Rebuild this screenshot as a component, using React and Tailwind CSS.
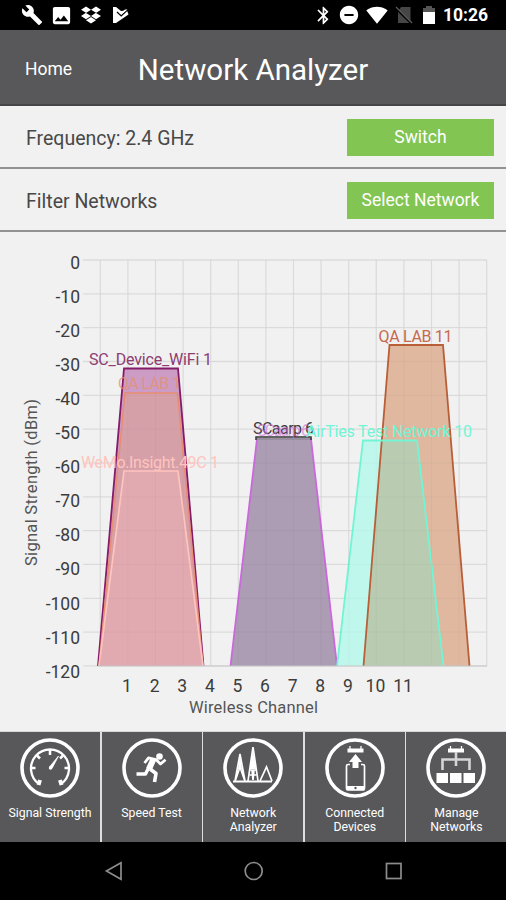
import {
  MdBuild,
  MdImage,
  MdBluetooth,
  MdDoNotDisturbOn,
  MdSignalWifi4Bar,
} from 'react-icons/md'
import { FaDropbox } from 'react-icons/fa6'

const LEFT = 83
const RIGHT = 487
const TOP = 28
const BOTTOM = 434

const vLines = Array.from({ length: 15 }, (_, i) => 100.3 + i * 27.6)
const hLines = Array.from({ length: 13 }, (_, i) => TOP + i * 33.83)
const levels = Array.from({ length: 13 }, (_, i) => i * -10)
const channels = [1, 2, 3, 4, 5, 6, 7, 8, 9, 10, 11]

function StatusBar() {
  return (
    <div className="h-[30px] bg-black text-white flex items-center justify-between pl-[21px] pr-[19px]">
      <div className="flex items-center">
        <MdBuild className="w-[22px] h-[22px]" />
        <MdImage className="w-[23px] h-[23px] ml-[7px]" />
        <FaDropbox className="w-[20px] h-[20px] ml-[8px]" />
        <svg viewBox="0 0 18 18" className="w-[18px] h-[18px] ml-[11px]">
          <path d="M1 1 L4 1 L9 5 L15 4.500 L16.500 8.500 L4 17 H1 Z" fill="#fff" />
          <path d="M5 6 L9.200 9.800 L16.500 3" stroke="#000" strokeWidth="1.300" fill="none" />
          <path d="M9 6.800 L13 3.500 L15.500 3.500 L9.300 8.800 L6.500 6.500 Z" fill="#fff" />
        </svg>
      </div>
      <div className="flex items-center">
        <MdBluetooth className="w-[21px] h-[21px]" />
        <MdDoNotDisturbOn className="w-[22px] h-[22px] ml-[4px]" />
        <MdSignalWifi4Bar className="w-[22px] h-[22px] ml-[6px]" />
        <svg viewBox="0 0 18 18" className="w-[18px] h-[18px] ml-[7px]">
          <path d="M6 1 H15.500 V17 H3 V6 Z" fill="#464646" />
          <path d="M1 2.500 L17 18" stroke="#000" strokeWidth="2.200" />
          <path d="M1 1 L17 17" stroke="#5a5a5a" strokeWidth="1.300" />
        </svg>
        <svg viewBox="0 0 14 20" className="w-[14px] h-[20px] ml-[9px]">
          <path d="M4 1h6v2h3v4H1V3h3z" fill="#555" />
          <path d="M1 7h12v12H1z" fill="#fff" />
        </svg>
        <span className="ml-[7px] w-[44px] whitespace-nowrap text-[17.5px] font-bold leading-none pt-[2px]">10:26</span>
      </div>
    </div>
  )
}

function SettingRow({ label, action }) {
  return (
    <div className="h-[63px] pl-[26px] pr-3 pt-[2px] flex items-center justify-between border-b-2 border-[#929292] text-[19.5px] text-[#484848]">
      <span className="pt-[2px]">{label}</span>
      <button className="w-[147px] h-[37px] bg-[#82c553] text-white text-[17.5px]">{action}</button>
    </div>
  )
}

function Chart() {
  return (
    <svg viewBox="0 0 506 499" className="w-[506px] h-[499px] block">
      <g stroke="#e1e1e1" strokeWidth="1.3">
        {vLines.map(x => <line key={x} x1={x} x2={x} y1={TOP} y2={BOTTOM} />)}
        {hLines.map(y => <line key={y} x1={LEFT} x2={RIGHT} y1={y} y2={y} />)}
      </g>

      {/* channel 1 */}
      <path d="M98 434 L124 136.500 H178 L203.500 434 Z" fill="#cc9cc5" />
      <path d="M98.500 434 L124.500 161 H178 L203 434 Z" fill="#d6a0a9" />
      <path d="M99 434 L124 239 H178 L203 434 Z" fill="#e1aab0" />
      <path d="M98 434 L124 136.500 H178 L203.500 434" fill="none" stroke="#861b68" strokeWidth="1.8" />
      <path d="M99 434 L125 161 H177.500 L203 434" fill="none" stroke="#e78d73" strokeWidth="1.5" />
      <path d="M99 434 L124 239 H178 L203 434" fill="none" stroke="#ffc4bd" strokeWidth="1.7" />

      {/* channel 6 */}
      <path d="M230.500 434 L257 207 H311 L337 434 Z" fill="#ac9cb4" />
      <path d="M230.500 434 L257 207 H311 L337 434" fill="none" stroke="#cb68dc" strokeWidth="1.8" />
      <path d="M256 208 V205 H311 V208" fill="none" stroke="#333" strokeWidth="1.5" />
      <path d="M258 207 H310" stroke="#65b565" strokeWidth="1" />

      {/* channels 10 and 11 */}
      <path d="M363.500 434 L389.500 113 H443 L469.500 434 Z" fill="#e0b8a0" />
      <path d="M337 434 L363 208.500 H417 L443.500 434 Z" fill="#c0f7ec" />
      <path d="M363.500 434 L381.800 208.500 H417 L443.500 434 Z" fill="#b9ccb2" />
      <path d="M363.500 434 L389.500 113 H443 L469.500 434" fill="none" stroke="#b85f38" strokeWidth="1.8" />
      <path d="M337 434 L363 208.500 H417 L443.500 434" fill="none" stroke="#70f5d5" strokeWidth="1.8" />

      {/* grid shows faintly through the fills */}
      <g stroke="#000" strokeOpacity="0.025" strokeWidth="1.3">
        {vLines.map(x => <line key={x} x1={x} x2={x} y1={TOP} y2={BOTTOM} />)}
        {hLines.map(y => <line key={y} x1={LEFT} x2={RIGHT} y1={y} y2={y} />)}
      </g>
      <line x1="98" x2={RIGHT} y1={BOTTOM} y2={BOTTOM} stroke="#c8c8c8" strokeWidth="1" />

      <g fontSize="16">
        <text x="89" y="133" textLength="123" fill="#8d3d72">SC_Device_WiFi 1</text>
        <text x="118" y="157" textLength="63" fill="#e5916f" fillOpacity="0.8">QA LAB 1</text>
        <text x="81" y="236" textLength="138" fill="#ffc4bd">WeMo.Insight.49C 1</text>
        <text x="253" y="202" textLength="61" fill="#3c3c3c">SCaarp 6</text>
        <text x="257" y="204" textLength="53" fill="#cb68dc" fillOpacity="0.6">SCaarp 6</text>
        <text x="306" y="205" textLength="166" fill="#70f5d5">AirTies Test Network 10</text>
        <text x="378.500" y="109.500" textLength="74" fill="#c56a50">QA LAB 11</text>
      </g>

      <g fontSize="17.500" fill="#3c3c3c" textAnchor="end">
        {levels.map((level, i) => (
          <text key={level} x="80" y={37 + i * 34.05}>{level}</text>
        ))}
      </g>
      <g fontSize="17.500" fill="#3c3c3c" textAnchor="middle">
        {channels.map((channel, i) => (
          <text key={channel} x={127 + i * 27.6} y="459.500">{channel}</text>
        ))}
      </g>
      <text x="189" y="481" textLength="129" fontSize="16.500" fill="#555">Wireless Channel</text>
      <text transform="translate(37 334) rotate(-90)" textLength="167" fontSize="16.500" fill="#555">
        Signal Strength (dBm)
      </text>
    </svg>
  )
}

function GaugeIcon() {
  return (
    <g fill="none" stroke="#fff">
      <path d="M19 46 A19 19 0 1 1 41 46" strokeWidth="2.3" />
      <path d="M20 42 L18.500 47 M40 42 L41.500 47" strokeWidth="4" />
      <path d="M30 12 V17 M11 30 H15.500 M49 30 H44.500 M17 17.500 L20 20.500 M43 17.500 L40 20.500" strokeWidth="2.5" />
      <path d="M38.500 18 L32 30.500 L29.500 29 Z" fill="#fff" strokeWidth="0.8" />
      <circle cx="30.500" cy="30" r="1.700" fill="#fff" stroke="none" />
    </g>
  )
}

function RunnerIcon() {
  return (
    <g fill="none" stroke="#fff" strokeLinejoin="round">
      <circle cx="37.500" cy="18.500" r="3.300" fill="#fff" stroke="none" />
      <path d="M22.500 25 L26.500 19.800 L34 21.500 L38.500 26 L43.500 21.800" strokeWidth="2.8" />
      <path d="M31.500 21 L27 31" strokeWidth="6" />
      <path d="M27 29 L23.500 36 H14.500" strokeWidth="3.4" />
      <path d="M28 31 L34 35.500 L32.500 44" strokeWidth="3.6" />
    </g>
  )
}

function PeaksIcon() {
  return (
    <g fill="none" stroke="#fff" strokeWidth="1.7">
      <path d="M10 43.500 H49" strokeWidth="2" />
      <path d="M12 43 L17 16 L22 43 M17 29 L12.500 42 M17 29 L21.500 42" />
      <path d="M25 43 L30 9 L35 43" />
      <path d="M30 12 L33 31 H27 Z M17 17 L19 31 H15 Z" fill="#fff" stroke="none" />
      <path d="M27 32 H33 M26.500 37 H33.500 M29 32 L30 42 L31 32" />
      <path d="M37 43 L43.500 29 L49 43" />
    </g>
  )
}

function DeviceIcon() {
  return (
    <g fill="none" stroke="#fff">
      <path d="M22.500 12.500 H38.500" strokeWidth="4" />
      <path d="M25 8 V12 M36 8 V12" strokeWidth="1.3" />
      <path d="M25 26.500 H23 Q21.500 26.500 21.500 28 V50 Q21.500 52 23.500 52 H37.500 Q39.500 52 39.500 50 V28 Q39.500 26.500 38 26.500 H36" strokeWidth="1.7" />
      <path d="M22 50 H39" strokeWidth="4" />
      <path d="M30.500 16 L37 24 H33.500 V30 H27.500 V24 H24 Z" fill="#fff" stroke="none" />
      <circle cx="30.500" cy="50" r="1.200" fill="#58585a" stroke="none" />
    </g>
  )
}

function TreeIcon() {
  return (
    <g fill="none" stroke="#fff">
      <path d="M22 12.500 H38" strokeWidth="4" />
      <path d="M24.500 8 V12 M35.500 8 V12" strokeWidth="1.3" />
      <path d="M16.500 32 V21.500 H43.500 V32 M30 14 V28" strokeWidth="2.6" stroke="#d5d5d5" />
      <path d="M10.500 35 H22 V45 H10.500 Z M24 35 H35.500 V45 H24 Z M37.500 35 H49 V45 H37.500 Z" fill="#fff" stroke="none" />
    </g>
  )
}

const tabs = [
  { label: 'Signal Strength', Icon: GaugeIcon },
  { label: 'Speed Test', Icon: RunnerIcon },
  { label: 'Network Analyzer', Icon: PeaksIcon },
  { label: 'Connected Devices', Icon: DeviceIcon },
  { label: 'Manage Networks', Icon: TreeIcon },
]

function TabBar() {
  return (
    <nav className="h-[110px] grid grid-cols-[repeat(5,100px)] gap-x-[1.6px] bg-[#dedede] text-white">
      {tabs.map(({ label, Icon }) => (
        <div key={label} className="flex flex-col items-center pt-[6px] bg-[#58585a]">
          <svg viewBox="0 0 60 60" className="w-[60px] h-[60px] shrink-0">
            <circle cx="30" cy="30" r="28" fill="none" stroke="#fff" strokeWidth="3.6" />
            <Icon />
          </svg>
          <span className="mt-[8px] px-[6px] text-center text-[12.3px] leading-[14px]">{label}</span>
        </div>
      ))}
    </nav>
  )
}

function SystemNav() {
  return (
    <div className="h-[58px] bg-black flex justify-center pt-[19px]">
      <svg viewBox="0 0 300 20" className="w-[300px] h-[20px]" fill="none" stroke="#8c8c8c" strokeWidth="1.7">
        <path d="M18 1.800 V18.200 L3.500 10 Z" />
        <circle cx="150.700" cy="10" r="8.500" />
        <rect x="283.500" y="2.500" width="14.500" height="15" />
      </svg>
    </div>
  )
}

export default function App() {
  return (
    <div className="w-[506px] h-[900px] overflow-hidden bg-[#f1f1f1] font-[Roboto,sans-serif]">
      <StatusBar />
      <header className="h-[76px] bg-[#58585a] border-b-2 border-[#454547] text-white grid grid-cols-[1fr_auto_1fr] items-center pt-[4px]">
        <span className="pl-[25px] text-[17.5px]">Home</span>
        <h1 className="pt-[3px] text-[29.5px]">Network Analyzer</h1>
      </header>
      <SettingRow label="Frequency: 2.4 GHz" action="Switch" />
      <SettingRow label="Filter Networks" action="Select Network" />
      <Chart />
      <div className="h-px bg-[#d8d8d8]" />
      <TabBar />
      <SystemNav />
    </div>
  )
}
